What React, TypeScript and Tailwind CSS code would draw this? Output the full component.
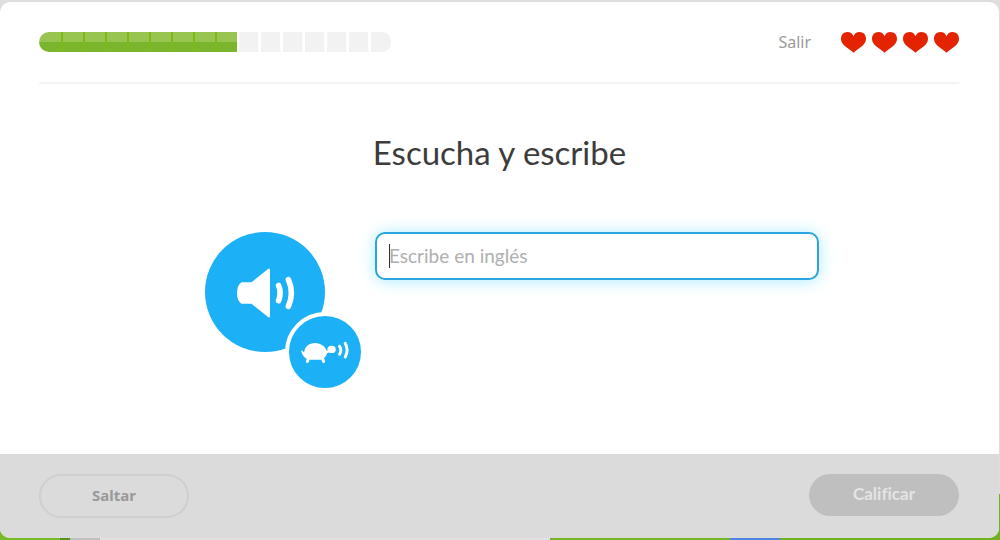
import { useState } from "react";

const TOTAL_STEPS = 16;
const DONE_STEPS = 9;
const HEARTS = 4;

function Progress() {
  return (
    <div
      role="progressbar"
      aria-label="Progreso"
      aria-valuemin={0}
      aria-valuemax={TOTAL_STEPS}
      aria-valuenow={DONE_STEPS}
      className="flex h-5 overflow-hidden rounded-[10px_8px_8px_10px/10px]"
    >
      {Array.from({ length: TOTAL_STEPS }, (_, i) =>
        i < DONE_STEPS ? (
          <span
            key={i}
            className={`w-[22px] bg-linear-to-b from-[#98c450] from-50% to-[#7bb52c] to-50% ${
              i > 0 ? "border-l-2 border-[#7eb91a]" : ""
            }`}
          />
        ) : (
          <span
            key={i}
            className={`w-[22px] border-l-2 border-white bg-[#f2f2f2] ${
              i < TOTAL_STEPS - 1 ? "border-r border-r-[#fcfcfc]" : ""
            }`}
          />
        )
      )}
    </div>
  );
}

function Heart() {
  return (
    <svg viewBox="0 0 25 21" className="h-[21px] w-[25px]" fill="#e42400" aria-hidden="true">
      <path d="M12.5 20.8C10.8 18.8 6.4 16.6 3.2 13.6C1 11.4 0 9.4 0 6.6C0 2.8 2.8 0 6.5 0C9.3 0 11.5 1.5 12.5 4.2C13.5 1.5 15.7 0 18.5 0C22.2 0 25 2.8 25 6.6C25 9.4 24 11.4 21.8 13.6C18.6 16.6 14.2 18.8 12.5 20.8Z" />
    </svg>
  );
}

function SpeakerIcon() {
  return (
    <svg viewBox="0 0 120 120" className="size-[120px]" aria-hidden="true">
      <path
        d="M36.5 50.3H46.5L63 37Q65 35.8 65 38.2V83.8Q65 86.2 63 85L46.5 71.8H36.5Q32 69 32 61T36.5 50.3Z"
        fill="#fff"
      />
      <path
        d="M73.6 53.5Q76.6 61 73.6 68.7M83.4 47.6Q89.4 61 83.4 74.4"
        fill="none"
        stroke="#fff"
        strokeWidth="5.6"
        strokeLinecap="round"
      />
    </svg>
  );
}

function TurtleIcon() {
  return (
    <svg viewBox="0 0 72 72" className="size-[72px]" aria-hidden="true">
      <g fill="#fff">
        <path d="M12.2 34.2Q13.6 34.6 15.2 36.6C15.4 30.8 20 27 26.2 27C32 27 36.6 30.8 37.6 34.8L39.8 34.4V36.6L37.8 37.6C37.2 40.6 34.5 43.8 31.5 43.8H21.5C16.5 43.8 12.6 38.8 12.2 34.2Z" />
        <ellipse cx="42.6" cy="33.4" rx="4.2" ry="3.7" />
      </g>
      <path
        d="M19.6 42L18.4 45.4M33.4 42L34.6 45.4"
        fill="none"
        stroke="#fff"
        strokeWidth="3"
        strokeLinecap="round"
      />
      <path
        d="M50.6 30.3Q53 33.8 50.6 38.3M56.2 27.2Q60 34 56.2 41"
        fill="none"
        stroke="#fff"
        strokeWidth="3"
        strokeLinecap="round"
      />
    </svg>
  );
}

function Scenery() {
  return (
    <div className="absolute inset-0 flex flex-col justify-end" aria-hidden="true">
      <div className="flex h-[46px]">
        <div className="w-[6%] bg-[#78b928]" />
        <div className="w-[1%] bg-[#559420]" />
        <div className="w-[3%] bg-[#c0c0c0]" />
        <div className="w-[45%] bg-[#e2e2e2]" />
        <div className="flex-1 bg-[#76b526]" />
        <div className="w-[5%] bg-[#4c86e2]" />
        <div className="w-[22%] bg-[#72b01f]" />
      </div>
    </div>
  );
}

export default function App() {
  const [answer, setAnswer] = useState("");

  return (
    <div className="relative flex min-h-screen flex-col bg-[#dedede] pt-0.5 pr-px pb-0.5 font-['Lato',sans-serif]">
      <Scenery />
      <main className="relative flex flex-1 flex-col overflow-hidden rounded-[10px] bg-white">
        <header className="mr-10 ml-[39px] flex h-[82px] items-center justify-between border-b-2 border-[#f4f4f4]">
          <Progress />
          <div className="flex items-center gap-[30px]">
            <a href="#salir" className="font-['Noto_Sans',sans-serif] text-base leading-5 text-[#999]">
              Salir
            </a>
            <div className="flex gap-1.5" role="img" aria-label="4 vidas">
              {Array.from({ length: HEARTS }, (_, i) => (
                <Heart key={i} />
              ))}
            </div>
          </div>
        </header>

        <section className="flex-1 pt-12 pb-16">
          <h1 className="text-center text-[33px] leading-10 text-[#3c3c3c]">Escucha y escribe</h1>
          <div className="mx-auto mt-[60px] flex max-w-[639px] items-start pl-[25px]">
            <div className="relative mr-[50px] shrink-0">
              <button type="button" aria-label="Escuchar" className="block rounded-full bg-[#1cb0f6]">
                <SpeakerIcon />
              </button>
              <button
                type="button"
                aria-label="Escuchar despacio"
                className="absolute -right-10 -bottom-10 rounded-full border-4 border-white bg-[#1cb0f6]"
              >
                <TurtleIcon />
              </button>
            </div>
            <div className="relative flex-1">
              <input
                type="text"
                aria-label="Escribe en inglés"
                placeholder="Escribe en inglés"
                value={answer}
                onChange={(e) => setAnswer(e.target.value)}
                className="block h-12 w-full rounded-[10px] border-2 border-[#2aa5df] bg-white px-3 pb-0.5 text-[19px] text-[#3c3c3c] shadow-[0_1px_16px_#a9ecff] outline-none placeholder:text-[#afafaf]"
              />
              {answer === "" && (
                <span className="pointer-events-none absolute top-3 left-3.5 h-6 w-px bg-[#333]" />
              )}
            </div>
          </div>
        </section>

        <footer className="flex h-[84px] items-start justify-between bg-[#dbdbdb] pt-5 pr-10 pl-[39px]">
          <button
            type="button"
            className="h-11 w-[150px] rounded-full border-2 border-[#cfcfcf] pb-0.5 font-['Noto_Sans',sans-serif] text-[15px] font-bold text-[#999]"
          >
            Saltar
          </button>
          <button
            type="button"
            className="h-[42px] w-[150px] rounded-full bg-[#bfbfbf] pb-0.5 text-[17px] font-bold text-[#e4e4e4] [font-variant-ligatures:none]"
          >
            Calificar
          </button>
        </footer>
      </main>
    </div>
  );
}
